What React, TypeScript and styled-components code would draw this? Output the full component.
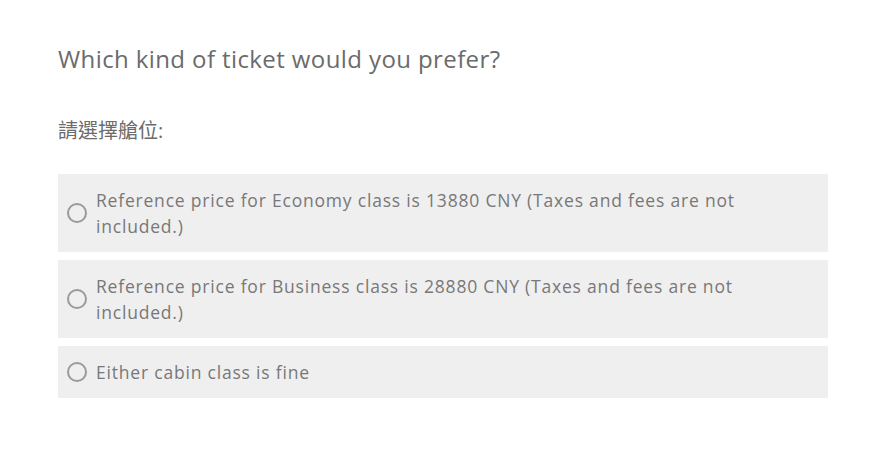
import styled, { createGlobalStyle } from "styled-components"

const GlobalStyle = createGlobalStyle`
    body {
        margin: 0;
        background: #fff;
        font-family: "Open Sans", "Noto Sans CJK TC", sans-serif;
    }
`

const StyledPage = styled.div`
    padding: 40px 68px 0 58px;
    display: flex;
    flex-direction: column;
`

const StyledTitle = styled.h1`
    margin: 0;
    font-size: 24px;
    font-weight: 400;
    line-height: 38px;
    letter-spacing: 0.4px;
    color: #6b6b6b;
`

const StyledSubTitle = styled.h2`
    margin: 38px 0 28px;
    font-size: 20px;
    font-weight: 400;
    line-height: 30px;
    color: #6b6b6b;
`

const StyledList = styled.div`
    display: flex;
    flex-direction: column;
    gap: 8px;
`

const StyledOption = styled.label`
    display: flex;
    align-items: center;
    gap: 9px;
    background: #efefef;
    padding: 13px 40px 13px 9px;
    cursor: pointer;
`

const StyledRadio = styled.span`
    flex: none;
    width: 20px;
    height: 20px;
    box-sizing: border-box;
    border: 2px solid #9a9a9a;
    border-radius: 50%;
`

const StyledText = styled.span`
    font-size: 17.5px;
    line-height: 26px;
    letter-spacing: 0.8px;
    color: #787878;
`

const options = [
    "Reference price for Economy class is 13880 CNY (Taxes and fees are not included.)",
    "Reference price for Business class is 28880 CNY (Taxes and fees are not included.)",
    "Either cabin class is fine",
]

const App = () => {
    return (
        <>
            <GlobalStyle />
            <StyledPage>
                <StyledTitle>Which kind of ticket would you prefer?</StyledTitle>
                <StyledSubTitle>請選擇艙位:</StyledSubTitle>
                <StyledList>
                    {options.map((text) => (
                        <StyledOption key={text}>
                            <StyledRadio />
                            <StyledText>{text}</StyledText>
                        </StyledOption>
                    ))}
                </StyledList>
            </StyledPage>
        </>
    )
}

export default App
